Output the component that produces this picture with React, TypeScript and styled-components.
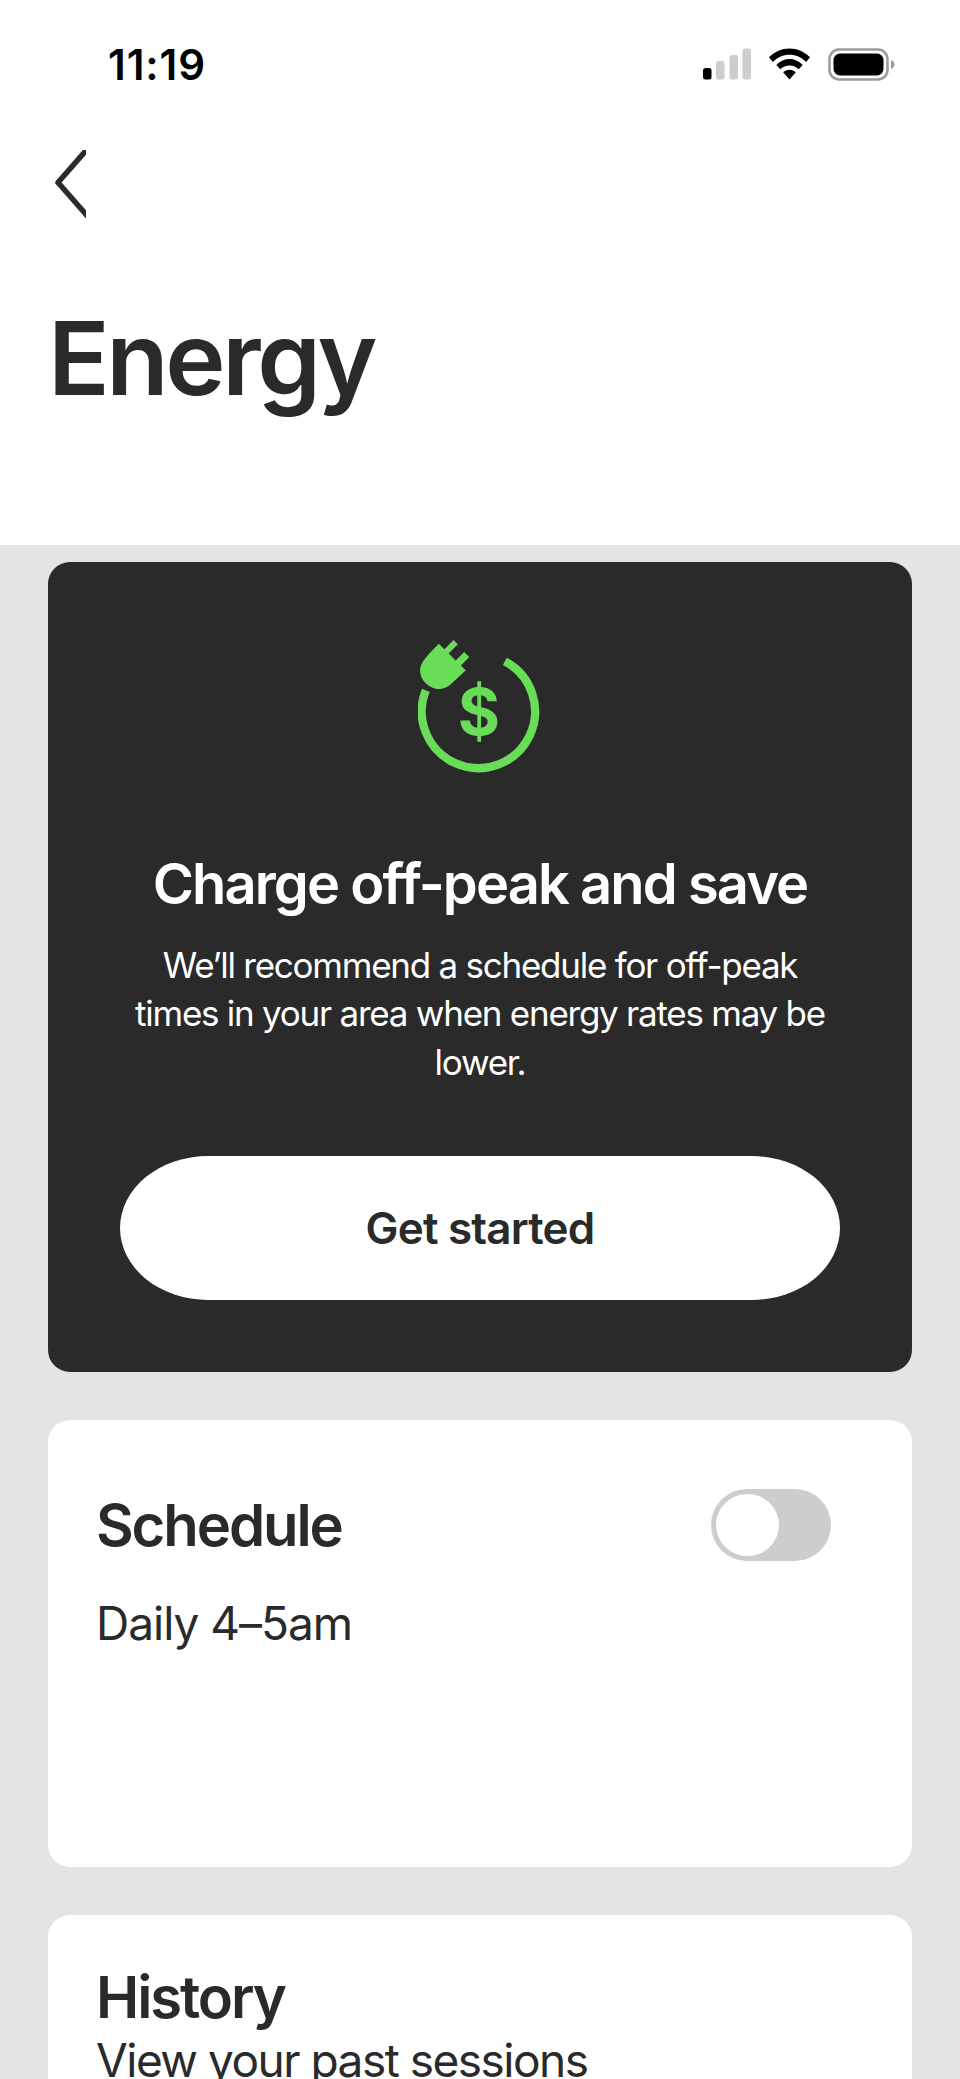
import React from 'react'
import styled, { createGlobalStyle } from 'styled-components'

const GlobalStyle = createGlobalStyle`
  html, body {
    margin: 0;
    padding: 0;
    height: 2079px;
    overflow: hidden;
    background: #e4e4e4;
    font-family: Inter, "Liberation Sans", sans-serif;
    color: #2a2a2a;
  }
`

const Page = styled.div`
  width: 960px;
  height: 2079px;
  overflow: hidden;
  background: #e4e4e4;
`

const Header = styled.header`
  height: 545px;
  background: #fff;
  display: flex;
  flex-direction: column;
`

const StatusBar = styled.div`
  height: 64px;
  padding: 32px 65px 0 108px;
  display: flex;
  align-items: center;
  justify-content: space-between;
`

const Clock = styled.span`
  font-size: 42px;
  font-weight: 600;
  letter-spacing: 0.9px;
  color: #000;
`

const StatusIcons = styled.div`
  display: flex;
  align-items: center;
  gap: 18px;
`

const BackButton = styled.button`
  width: 38px;
  height: 70px;
  margin: 54px 0 0 48px;
  padding: 0;
  border: none;
  background: none;
  display: block;
`

const Title = styled.h1`
  margin: 78px 0 0 48px;
  font-size: 102px;
  line-height: 120px;
  font-weight: 600;
  letter-spacing: -3.4px;
`

const Stack = styled.main`
  display: flex;
  flex-direction: column;
  gap: 48px;
  padding: 17px 48px 0;
`

const PromoCard = styled.section`
  height: 810px;
  box-sizing: border-box;
  border-radius: 22px;
  background: #2a2a2a;
  color: #fff;
  display: flex;
  flex-direction: column;
  align-items: center;
  padding: 76px 72px 72px;
`

const IconSlot = styled.div`
  padding-right: 2px;
  height: 135px;
`

const PromoTitle = styled.h2`
  margin: 77px 0 0;
  font-size: 56px;
  line-height: 68px;
  font-weight: 600;
  letter-spacing: -1.9px;
  text-align: center;
`

const PromoText = styled.p`
  margin: 23px 0 0;
  width: 720px;
  font-size: 35px;
  line-height: 48.4px;
  letter-spacing: -1.25px;
  text-align: center;
`

const PrimaryButton = styled.button`
  margin-top: auto;
  width: 720px;
  height: 144px;
  border: none;
  border-radius: 88px / 72px;
  background: #fff;
  color: #2a2a2a;
  font-family: inherit;
  font-size: 44px;
  font-weight: 600;
  letter-spacing: -0.8px;
`

const Card = styled.section<{ $height: number }>`
  height: ${(p) => p.$height}px;
  box-sizing: border-box;
  border-radius: 22px;
  background: #fff;
  padding: 47px 48px;
`

const ScheduleRow = styled.div`
  display: flex;
  align-items: center;
  justify-content: space-between;
  margin-top: 22px;
  padding-right: 33px;
`

const CardTitle = styled.h2`
  margin: 0;
  font-size: 58px;
  line-height: 70px;
  font-weight: 600;
  letter-spacing: -2.1px;
`

const CardText = styled.p<{ $top: number; $tracking: number }>`
  margin: ${(p) => p.$top}px 0 0;
  font-size: 46px;
  line-height: 56px;
  letter-spacing: ${(p) => p.$tracking}px;
`

const Toggle = styled.div`
  width: 120px;
  height: 72px;
  box-sizing: border-box;
  padding: 5px;
  border-radius: 36px;
  background: #cdcdcd;
`

const Knob = styled.div`
  width: 63px;
  height: 62px;
  border-radius: 50%;
  background: #fff;
`

const SignalIcon = () => (
  <svg width="48" height="32" viewBox="0 0 48 32">
    <rect x="0" y="20" width="8.500" height="11.500" rx="2.500" fill="#000" />
    <rect x="13" y="13" width="8.500" height="18.500" rx="2.500" fill="#cdcdcd" />
    <rect x="26.500" y="7" width="8.500" height="24.500" rx="2.500" fill="#cdcdcd" />
    <rect x="39.500" y="0.500" width="8.500" height="31" rx="2.500" fill="#cdcdcd" />
  </svg>
)

const WifiIcon = () => (
  <svg width="41" height="32" viewBox="0 0 42 32">
    <path d="M21 0C13 0 6 3 0 9l4 5c5-5 10.500-7.500 17-7.500S33 9 38 14l4-5C36 3 29 0 21 0z" fill="#000" />
    <path d="M21 11c-5 0-9.500 2-13.500 6l4 4.500c2.500-2.500 5.700-4 9.500-4s7 1.500 9.500 4l4-4.500c-4-4-8.500-6-13.500-6z" fill="#000" />
    <path d="M21 22c-2.500 0-4.500 1-6.500 2.500L21 32l6.500-7.500C25.500 23 23.500 22 21 22z" fill="#000" />
  </svg>
)

const BatteryIcon = () => (
  <svg width="67" height="33" viewBox="0 0 67 33">
    <rect x="1.500" y="1.500" width="58" height="30" rx="9.500" fill="none" stroke="#9a9a9a" strokeWidth="2.500" />
    <rect x="5.500" y="5.500" width="50" height="22" rx="6.500" fill="#000" />
    <path d="M63 12c2 .6 3.500 2.300 3.500 4.500S65 20.400 63 21z" fill="#9a9a9a" />
  </svg>
)

// the stroke runs past the right edge on purpose, the reference has flat vertical ends
const BackIcon = () => (
  <svg width="38" height="70" viewBox="0 0 38 70" style={{ display: 'block' }}>
    <path d="M42 -4 L10 32.500 L42 69" fill="none" stroke="#2a2a2a" strokeWidth="5.500" strokeLinejoin="round" />
  </svg>
)

const PlugIcon = () => (
  <svg width="122" height="135" viewBox="120 55 365 405" style={{ display: 'block' }}>
    <path d="M380 125 A170 170 0 1 1 143 212" fill="none" stroke="#69dc58" strokeWidth="25" />
    <path
      d="M182 72 L198.500 88.500 L226 61 L239 74 L211.500 101.500 L232.500 122.500 L258 97 L273 112 L248 138 L263 152 L218 194 C198 212 168 214 146 194 C126 176 120 150 132 130 C138 118 150 104 182 72 Z"
      fill="#69dc58"
    />
    <text
      x="302"
      y="345"
      textAnchor="middle"
      fontFamily="Inter, sans-serif"
      fontSize="194"
      fontWeight="700"
      fill="#69dc58"
    >
      $
    </text>
  </svg>
)

export default function App() {
  return (
    <Page>
      <GlobalStyle />
      <Header>
        <StatusBar>
          <Clock>11:19</Clock>
          <StatusIcons>
            <SignalIcon />
            <WifiIcon />
            <BatteryIcon />
          </StatusIcons>
        </StatusBar>
        <BackButton aria-label="Back">
          <BackIcon />
        </BackButton>
        <Title>Energy</Title>
      </Header>
      <Stack>
        <PromoCard>
          <IconSlot>
            <PlugIcon />
          </IconSlot>
          <PromoTitle>Charge off-peak and save</PromoTitle>
          <PromoText>
            We’ll recommend a schedule for off-peak times in your area when energy rates may be lower.
          </PromoText>
          <PrimaryButton>Get started</PrimaryButton>
        </PromoCard>
        <Card $height={447}>
          <ScheduleRow>
            <CardTitle>Schedule</CardTitle>
            <Toggle>
              <Knob />
            </Toggle>
          </ScheduleRow>
          <CardText $top={34} $tracking={-1}>
            Daily 4–5am
          </CardText>
        </Card>
        <Card $height={400}>
          <CardTitle>History</CardTitle>
          <CardText $top={0} $tracking={-1.5}>
            View your past sessions
          </CardText>
        </Card>
      </Stack>
    </Page>
  )
}
